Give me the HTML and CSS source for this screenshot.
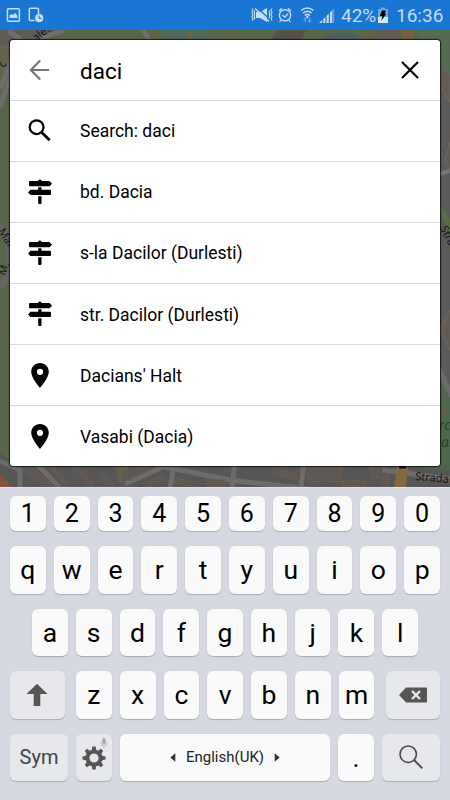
FILE: index.html
```
<!DOCTYPE html>
<html lang="en">
<head>
    <meta charset="UTF-8">
    <meta name="viewport" content="width=device-width, initial-scale=1.0">
    <title>Map Search</title>
    <link rel="stylesheet" href="styles.css">
</head>
<body>
    <!-- Shared icons -->
    <svg class="sprite" width="0" height="0">
        <symbol id="sign" viewBox="0 0 24 26">
            <path d="M10.2 1.2Q11.8-.2 13.5 1.2V2H21.5L24 4.7 21.5 7.3H2Q1 7.3 1 6.2V3Q1 2 2 2H10.2zM10.2 8.3H13.5V10.8H22Q23 10.8 23 12V15Q23 16 22 16H2.5L0 13.4 2.5 10.8H10.2zM10.2 17.3H13.5V24Q13.5 25 12.5 25H11.2Q10.2 25 10.2 24z"/>
        </symbol>
        <symbol id="pin" viewBox="0 0 18 25">
            <path fill-rule="evenodd" d="M9 0C4 0 .2 3.9.2 8.8.2 15.2 9 25 9 25S17.8 15.2 17.8 8.8C17.8 3.9 14 0 9 0zM9 5.7A3.1 3.1 0 1 1 9 11.9 3.1 3.1 0 0 1 9 5.7z"/>
        </symbol>
    </svg>
    <header class="status-bar">
        <svg class="status-left" width="44" height="30" viewBox="0 0 44 30">
            <rect x="7.4" y="8.7" width="12" height="12.6" rx="1" fill="none" stroke="#c5dcf4" stroke-width="1.5"/>
            <path d="M9.5 18v-2.5l2-1.5 1.5 1 2-2.3 2.5 3V18z" fill="#c5dcf4"/>
            <path d="M34.5 20.6h-4.2q-1 0-1-1V9.3q0-1 1-1h7.2q1 0 1 1V14" fill="none" stroke="#c5dcf4" stroke-width="1.5"/>
            <circle cx="39.2" cy="18.2" r="4.1" fill="#c5dcf4"/>
            <path d="M39.2 15.7v2.7h2.3" fill="none" stroke="#1976d2"/>
        </svg>
        <div class="status-right">
            <svg width="86" height="30" viewBox="250 0 86 30" fill="none" stroke="#c5dcf4">
                <path d="M252 8.5l1 2-1 2 1 2-1 2 1 2-1 2M254.5 10.5v9M272 8.5l-1 2 1 2-1 2 1 2-1 2 1 2M269.5 10.5v9" stroke-width="1.1"/>
                <path d="M256 12h4l7-4v14l-7-4h-4z" fill="#c5dcf4" stroke="none"/>
                <path d="M256.5 7l14 13" stroke="#1976d2" stroke-width="1.4"/>
                <path d="M255 8.5l14 13" stroke-width="1.3"/>
                <circle cx="285" cy="15.3" r="5.6" stroke-width="1.4"/>
                <path d="M282.5 15l2.2 2.2 3.3-3.5M279 11l3-2.8M291 11l-3-2.8M281 20l-1.3 2M289 20l1.3 2" stroke-width="1.3"/>
                <path d="M301.2 10.3Q307.3 5.5 313.4 10.3M303 13Q307.3 9.5 311.6 13M304.8 15.5Q307.3 13.3 309.8 15.5" stroke-width="1.5"/>
                <circle cx="307.3" cy="17" r="1.2" fill="#c5dcf4" stroke="none"/>
                <path d="M305 18v4M303.5 19.6l1.5-1.8 1.5 1.8M309.5 18v4M308 20.4l1.5 1.8 1.5-1.8" stroke="#75abe3"/>
                <path d="M319 23l3-3v3zM323.2 19l2.2-2v6h-2.2zM326.6 15.8l2.2-2.2V23h-2.2zM330 12.5l2-2V23h-2z" fill="#c5dcf4" stroke="none"/>
                <path d="M332.2 10.3l2-2V23h-2z" fill="#65a2e0" stroke="none"/>
            </svg>
            <span class="percent">42%</span>
            <svg class="battery" width="12" height="30" viewBox="0 0 12 30">
                <path d="M1 9h3V7.5h4V9h3v14H1z" fill="#6faae5"/>
                <path d="M1 17h10v6H1z" fill="#d8e9fa"/>
                <path d="M5 10.5h4L7.7 13.7H9.5L4.3 20.5 5.3 16H2.8z" fill="#000"/>
            </svg>
            <span class="clock">16:36</span>
        </div>
    </header>

    <main>
        <!-- Dimmed street map behind the search card -->
        <svg class="map" width="450" height="458" viewBox="0 30 450 458">
            <rect y="30" width="450" height="458" fill="#596549"/>
            <path d="M0 30H55L30 41 10 60V90H0z" fill="#5e5b56"/>
            <path d="M0 45H12V78L0 105z" fill="#64644e"/>
            <path d="M0 88L12 60M0 107L13 70M8 30L24 43M64 30L28 43" stroke="#6f6d6e" stroke-width="5"/>
            <path d="M142 28l9 15" stroke="#706d70" stroke-width="5"/>
            <path d="M160 30h45l8 11h-47z" fill="#50675b"/>
            <path d="M187 36l3-5 3 6zM198 31l5 3" fill="#80602f"/>
            <path d="M278 30h28l-6 11h-30z" fill="#555048"/>
            <path d="M320 41q10-12 35-7l10 7z" fill="#4b5f63"/>
            <path d="M367 41l14-11h18l2 11z" fill="#625952"/>
            <path d="M402 30h12v11h-13z" fill="#765f3e"/>
            <path d="M415 30h35v60l-12-30z" fill="#536b50"/>
            <path d="M238 35l4-5M317 30v7M355 31l22 8M429 33v7" stroke="#984c43" stroke-dasharray="2 3"/>
            <!-- Right strip -->
            <path d="M438 65l12 10V488h-12z" fill="#5b5a59"/>
            <path d="M438 67l12 7v28l-12-18zM450 142l-5 18 5 10M438 202l12 22M450 310l-10 20 10 20" fill="#625b54" stroke="#756962"/>
            <path d="M438 174l12-3" stroke="#777" stroke-width="4"/>
            <path d="M438 202l12 17v14l-12-24z" fill="#576c43"/>
            <path d="M438 372l12 20v75h-12z" fill="#4c674c"/>
            <path d="M443 400l5-4M442 415l6-6M442 432l7-6M442 455l7-4" stroke="#984c43" stroke-dasharray="2 4"/>
            <path d="M438 368l14 28" stroke="#6d6a6d" stroke-width="6"/>
            <!-- Left strip -->
            <path d="M0 225q12 20 10 45l-10 18" fill="none" stroke="#656565" stroke-width="7"/>
            <path d="M1 324l6-6M1 407l10 7" stroke="#984c43" stroke-width="1.5" stroke-dasharray="2 3"/>
            <!-- Streets under the card -->
            <path d="M0 453l12 9 428 2v-2l10 4v22H0z" fill="#565656"/>
            <path d="M0 474l13 14H0z" fill="#85503d"/>
            <path d="M0 461l20 9v18M35 462l25 26M125 484l40-18M165 467l65 13 80 9M170 488l4-22M235 462l-3 26M304 462l-3 26M382 470l68 9" fill="none" stroke="#6c6c6c" stroke-width="5"/>
            <path d="M27 472l6-3 19 17h-7zM51 468l6 3 14 16h-6zM72 467l4-1 18 18-3 3zM98 476l4-3 14 14h-8zM123 474l34-11 6 1-35 16zM145 483l18-8 2 3-17 9zM176 478l17 4-2 4-17-3zM206 479l19 1v6h-17zM275 470l22 4v5l-23-4zM307 465h34l-1 17h-12l-1-4-15 7-4-3zM343 480l23 1v5h-24zM372 463h6v15l-7-1zM383 476l6-1-2 12h-6z" fill="#5f5752" stroke="#6e5b53"/>
            <path d="M115 465l15-2-3 8-4 1v9l-4 2z" fill="#63614a"/>
            <path d="M397 466h11l-2 22h-12z" fill="#856a3f"/>
            <path d="M399 467h7" stroke="#111" stroke-width="3"/>
            <path d="M409 462h41v8l-41-4z" fill="#4c674c"/>
            <g class="map-label">
                <text transform="translate(36 42) rotate(-38)">ales</text>
                <text transform="translate(5 68) rotate(-70)">c</text>
                <text transform="translate(-2 231) rotate(58)">Maria</text>
                <text transform="translate(5 276) rotate(-70)">M.</text>
                <text transform="translate(440 228) rotate(63)">Strada</text>
                <text transform="translate(415 480) rotate(5)">Strada</text>
                <text transform="translate(449 484)">C</text>
            </g>
            <g class="park-label">
                <text x="439" y="430">rc</text>
                <text x="441" y="447">a.</text>
            </g>
        </svg>

        <div class="search-card">
            <div class="search-box">
                <svg class="icon" width="24" height="24" viewBox="0 0 24 24" fill="none" stroke="#757575" stroke-width="2.1">
                    <path d="M21 12H3M12.2 2.6L2.8 12l9.4 9.4"/>
                </svg>
                <span class="query">daci</span>
                <svg class="clear" width="18" height="18" viewBox="0 0 18 18" fill="none" stroke="#000" stroke-width="2.2">
                    <path d="M1 1l16 16M17 1L1 17"/>
                </svg>
            </div>
            <div class="result">
                <svg class="icon" width="24" height="24" viewBox="0 0 24 24" fill="none" stroke="#000">
                    <circle cx="8.6" cy="8.2" r="6.9" stroke-width="2.2"/>
                    <path d="M13.8 13.4l7.9 7.9" stroke-width="2.8"/>
                </svg>
                <span>Search: daci</span>
            </div>
            <div class="result">
                <svg class="icon" width="24" height="26"><use href="#sign"/></svg>
                <span>bd. Dacia</span>
            </div>
            <div class="result">
                <svg class="icon" width="24" height="26"><use href="#sign"/></svg>
                <span>s-la Dacilor (Durlesti)</span>
            </div>
            <div class="result low">
                <svg class="icon" width="24" height="26"><use href="#sign"/></svg>
                <span>str. Dacilor (Durlesti)</span>
            </div>
            <div class="result low">
                <svg class="icon" width="24" height="25"><use href="#pin"/></svg>
                <span>Dacians' Halt</span>
            </div>
            <div class="result low">
                <svg class="icon" width="24" height="25"><use href="#pin"/></svg>
                <span>Vasabi (Dacia)</span>
            </div>
        </div>
    </main>

    <section class="keyboard">
        <div class="row numbers">
            <div class="key">1</div><div class="key">2</div><div class="key">3</div><div class="key">4</div><div class="key">5</div>
            <div class="key">6</div><div class="key">7</div><div class="key">8</div><div class="key">9</div><div class="key">0</div>
        </div>
        <div class="row">
            <div class="key">q</div><div class="key">w</div><div class="key">e</div><div class="key">r</div><div class="key">t</div>
            <div class="key">y</div><div class="key">u</div><div class="key">i</div><div class="key">o</div><div class="key">p</div>
        </div>
        <div class="row middle">
            <div class="key">a</div><div class="key">s</div><div class="key">d</div><div class="key">f</div><div class="key">g</div>
            <div class="key">h</div><div class="key">j</div><div class="key">k</div><div class="key">l</div>
        </div>
        <div class="row">
            <div class="key gray shift">
                <svg width="22" height="24" viewBox="0 0 22 24"><path d="M11 .8L21.5 11H14.3V23H7.7V11H.5z" fill="#555"/></svg>
            </div>
            <div class="key">z</div><div class="key">x</div><div class="key">c</div><div class="key">v</div>
            <div class="key">b</div><div class="key">n</div><div class="key">m</div>
            <div class="key gray delete">
                <svg width="30" height="16" viewBox="0 0 30 16">
                    <path d="M1 8L8 .5H29V15.5H8z" fill="#555"/>
                    <path d="M14 4l8 8M22 4l-8 8" stroke="#e8e9ed" stroke-width="2.4"/>
                </svg>
            </div>
        </div>
        <div class="row bottom">
            <div class="key gray sym">Sym</div>
            <div class="key gray settings">
                <svg class="gear" width="24" height="24" viewBox="-12 -12 24 24">
                    <circle r="6.6" fill="none" stroke="#555" stroke-width="4"/>
                    <g fill="#555">
                        <path id="tooth" d="M-2.2-8L-1.6-11.5H1.6L2.2-8z"/>
                        <use href="#tooth" transform="rotate(45)"/>
                        <use href="#tooth" transform="rotate(90)"/>
                        <use href="#tooth" transform="rotate(135)"/>
                        <use href="#tooth" transform="rotate(180)"/>
                        <use href="#tooth" transform="rotate(225)"/>
                        <use href="#tooth" transform="rotate(270)"/>
                        <use href="#tooth" transform="rotate(315)"/>
                    </g>
                </svg>
                <svg class="mic" width="8" height="11" viewBox="0 0 8 11">
                    <rect x="2.2" y="0" width="3.6" height="6.6" rx="1.8" fill="#aaa"/>
                    <path d="M.6 4v1q0 2.8 3.4 2.8T7.4 5V4M4 8v2.5" fill="none" stroke="#bdbdc0"/>
                </svg>
            </div>
            <div class="key space">
                <svg width="6" height="9" viewBox="0 0 6 9"><path d="M5.3.3v8.4L.3 4.5z" fill="#333"/></svg>
                <span>English(UK)</span>
                <svg width="6" height="9" viewBox="0 0 6 9"><path d="M.7.3v8.4l5-4.2z" fill="#333"/></svg>
            </div>
            <div class="key dot">.</div>
            <div class="key gray find">
                <svg width="24" height="24" viewBox="0 0 24 24" fill="none" stroke="#444">
                    <circle cx="9.2" cy="9.2" r="8.2" stroke-width="1.5"/>
                    <path d="M15 15l8.3 8.3" stroke-width="1.8"/>
                </svg>
            </div>
        </div>
    </section>
</body>
</html>
```
FILE: styles.css
```
* {
    margin: 0;
    padding: 0;
    box-sizing: border-box;
}
body {
    width: 450px;
    height: 800px;
    overflow: hidden;
    font-family: Roboto, sans-serif;
    color: #000;
}
svg {
    display: block;
    flex-shrink: 0;
}
.sprite {
    display: none;
}

/* Status bar */
.status-bar {
    display: flex;
    justify-content: space-between;
    height: 30px;
    background-color: #1976d2;
    color: #c5dcf4;
    font-size: 19px;
    line-height: 32px;
}
.status-right {
    display: flex;
    padding-right: 7px;
}
.percent {
    width: 36px;
    margin-left: 5px;
    white-space: nowrap;
}
.clock {
    width: 47px;
    margin-left: 7px;
    white-space: nowrap;
}

/* Map and search card */
main {
    position: relative;
    height: 457px;
    padding: 10px;
    overflow: hidden;
}
.map {
    position: absolute;
    top: 0;
    left: 0;
}
.map-label {
    font: 11px "Noto Sans", sans-serif;
    fill: #151515;
}
.park-label {
    font: italic 14px "Noto Sans", sans-serif;
    fill: #214b2b;
}
.search-card {
    position: relative;
    background-color: #fff;
    border-radius: 3px;
    box-shadow: 0 0 1px 1px rgba(0, 0, 0, 0.75);
}
.search-box,
.result {
    display: flex;
    align-items: center;
    padding: 0 21px 0 18px;
}
.search-box {
    height: 60px;
}
.icon {
    margin-right: 28px;
}
.query {
    flex: 1;
    font-size: 22.5px;
    padding-top: 2px;
}
.result {
    height: 61px;
    border-top: 1px solid #d9d9d9;
    font-size: 17.5px;
}
.low span {
    padding-top: 2px;
}

/* Keyboard */
.keyboard {
    height: 313px;
    padding: 8px 10px 0;
    background-color: #d5d8e0;
    border-top: 1px solid #e2e4e9;
}
.row {
    display: flex;
    gap: 8px;
    height: 47.5px;
    margin-bottom: 15px;
}
.numbers {
    height: 35px;
}
.middle {
    padding: 0 22px;
}
.key {
    display: flex;
    flex: 1;
    align-items: center;
    justify-content: center;
    background-color: #fafafa;
    border-radius: 6px;
    box-shadow: 0 1px 1px #a9abb1;
    font-size: 26.5px;
}
.numbers .key {
    font-size: 25px;
}
.gray {
    background-color: #e7e8ec;
    color: #444;
}
.shift {
    flex: 0 0 54.5px;
    margin-right: 3.5px;
}
.delete {
    flex: 0 0 54px;
    margin-left: 3.5px;
}
.bottom .key {
    flex: none;
}
.bottom .sym {
    width: 58px;
    font-size: 20px;
}
.bottom .settings {
    position: relative;
    width: 36px;
}
.gear {
    margin-top: 2px;
}
.mic {
    position: absolute;
    top: 4px;
    right: 4px;
}
.bottom .space {
    flex: 1;
    gap: 10px;
    font-size: 15px;
    color: #222;
}
.bottom .dot {
    width: 36px;
}
.bottom .find {
    width: 58px;
}
```
